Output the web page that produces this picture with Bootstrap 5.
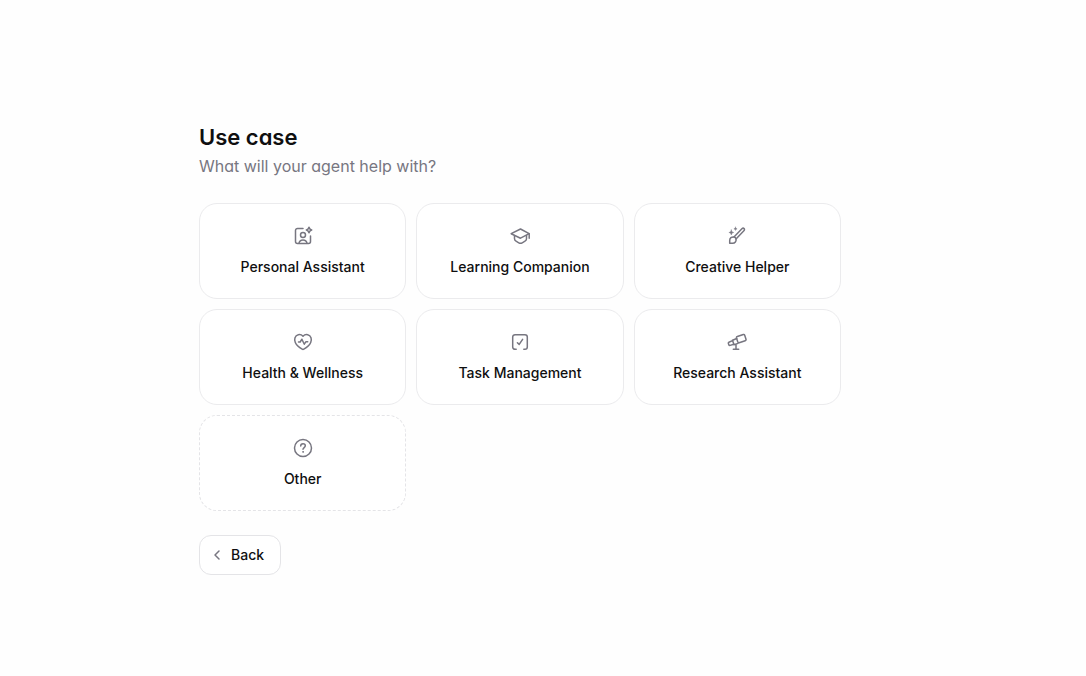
<!DOCTYPE html>
<html lang="en">
<head>
<meta charset="utf-8">
<meta name="viewport" content="width=device-width, initial-scale=1">
<title>Use case</title>
<link href="https://cdn.jsdelivr.net/npm/bootstrap@5.3.0/dist/css/bootstrap.min.css" rel="stylesheet">
<style>
  body { font-family: Inter, "Liberation Sans", sans-serif; font-size: 14px; line-height: 20px; color: #0f0f10; background: #fefefe; }
  .page { padding: 122px 58px 24px 12px; }
  .wizard { max-width: 642px; }
  .title, .subtitle { font-feature-settings: "cv11", "ss03"; }
  .title { font-size: 22px; line-height: 30px; font-weight: 600; }
  .subtitle { font-size: 16px; line-height: 28px; color: #777681; margin-bottom: 23px; }
  .choices { display: grid; grid-template-columns: repeat(3, minmax(0, 1fr)); gap: 10px; margin-bottom: 24px; }
  .choice, .back { border: 1px solid #ebebed; background: #fff; color: #0f0f10; font-size: 14px; line-height: 20px; font-weight: 500; }
  .choice { border-radius: 18px; padding: 22px 12px 21px; gap: 11px; }
  .choice:hover, .back:hover { background: #f8f8f9; border-color: #dedee2; }
  .other { border-style: dashed; border-color: #e4e4e7; }
  .back { border-color: #e4e4e7; border-radius: 12px; padding: 9px 16px 9px 12px; gap: 8px; }
  svg { fill: none; stroke: #777680; stroke-width: 1.5; stroke-linecap: round; stroke-linejoin: round; }
  @media (max-width: 600px) { .page { padding: 40px 16px; } .choices { grid-template-columns: 1fr; } }
</style>
</head>
<body>
<main class="page">
  <div class="wizard mx-auto">
    <h1 class="title mb-0">Use case</h1>
    <p class="subtitle">What will your agent help with?</p>
    <div class="choices">
      <button type="button" class="choice btn d-flex flex-column align-items-center">
        <svg width="20" height="20" viewBox="0 0 20 20" aria-hidden="true"><path d="M10 2.500H4.500a2 2 0 0 0-2 2v11a2 2 0 0 0 2 2h11a2 2 0 0 0 2-2V10"/><circle cx="10" cy="9" r="2.500"/><path d="M6 17.200c.4-2.200 1.900-3.200 4-3.200s3.600 1 4 3.200"/><path d="M16 1.300c.5 1.800 1 2.300 2.700 2.700-1.700.4-2.200 1-2.700 2.700-.5-1.700-1-2.300-2.700-2.700 1.700-.4 2.200-.9 2.700-2.700Z"/></svg>
        <span>Personal Assistant</span>
      </button>
      <button type="button" class="choice btn d-flex flex-column align-items-center">
        <svg width="20" height="20" viewBox="0 0 20 20" aria-hidden="true"><path d="M1.200 7.700 10.500 3l8.700 4.700-8.700 4.500L1.200 7.700Z"/><path d="M4.500 9.600v3.200c0 1.100.5 1.800 1.500 2.400l2.800 1.600c1.100.6 2.300.6 3.400 0l2.800-1.600c1-.6 1.500-1.300 1.500-2.400V9.600M19.200 7.900v4.300"/></svg>
        <span>Learning Companion</span>
      </button>
      <button type="button" class="choice btn d-flex flex-column align-items-center">
        <svg width="20" height="20" viewBox="0 0 20 20" aria-hidden="true"><path d="m7 11 7.900-8.200c.7-.7 1.600-.8 2.200-.2s.5 1.500-.2 2.200L9 13"/><path d="M9 13c-.2-1.200-.9-1.900-2-2-2.600-.3-4.300 1-4.300 3.400v2.900h2.900C8 17.300 9.500 15.400 9 13Z"/><path d="M8.500 1.200c.2 1 .6 1.400 1.600 1.600-1 .2-1.400.6-1.600 1.600-.2-1-.6-1.400-1.600-1.600 1-.2 1.400-.6 1.600-1.600ZM4.300 4c.3 1.600.9 2.200 2.400 2.500-1.500.3-2.100.9-2.400 2.400-.3-1.500-.9-2.100-2.400-2.400C3.400 6.200 4 5.600 4.300 4Z" fill="#777680" stroke-width=".5"/></svg>
        <span>Creative Helper</span>
      </button>
      <button type="button" class="choice btn d-flex flex-column align-items-center">
        <svg width="20" height="20" viewBox="0 0 20 20" aria-hidden="true"><path d="M10 4.200C8.600 2.700 7 2.300 5.300 2.700 1.900 3.500.9 7.200 2.300 10.500c1.200 2.700 3.800 4.900 6.900 6.700.5.3 1.100.3 1.600 0 3.100-1.800 5.700-4 6.900-6.700 1.400-3.300.4-7-3-7.800C13 2.300 11.400 2.700 10 4.200Z"/><path d="M5.500 10h1.700l1.700-2.800 2.400 5 1.700-2.500h1.700"/></svg>
        <span>Health &amp; Wellness</span>
      </button>
      <button type="button" class="choice btn d-flex flex-column align-items-center">
        <svg width="20" height="20" viewBox="0 0 20 20" aria-hidden="true"><path d="M6.200 17.300H5a2.300 2.300 0 0 1-2.300-2.300V5A2.300 2.300 0 0 1 5 2.700h10A2.300 2.300 0 0 1 17.300 5v10a2.300 2.300 0 0 1-2.300 2.300h-1.200M7.400 10.700l1.800 1.700 3.400-5"/></svg>
        <span>Task Management</span>
      </button>
      <button type="button" class="choice btn d-flex flex-column align-items-center">
        <svg width="20" height="20" viewBox="0 0 20 20" aria-hidden="true"><path d="m10.300 4.500 6-2c.7-.2 1.200.1 1.400.7l1.300 4.100c.2.700-.1 1.200-.8 1.400l-6 2c-.7.200-1.200-.1-1.400-.8L9.500 6c-.2-.7.100-1.300.8-1.500Z"/><path d="M9.700 6.500 5.500 8.200l1.500 4.500 4-1.300M5.500 8.600l-3.600 1.600c-.5.200-.7.700-.5 1.200l.5 1.500c.2.500.6.700 1.200.5l3.700-1.100M9 12.200v5.100M6.300 17.300h5.400"/></svg>
        <span>Research Assistant</span>
      </button>
      <button type="button" class="choice other btn d-flex flex-column align-items-center">
        <svg width="20" height="20" viewBox="0 0 20 20" aria-hidden="true"><circle cx="10" cy="10" r="8.500"/><path d="M7.700 8c0-1.400 1-2.300 2.300-2.300s2.300.9 2.300 2.100c0 1.700-2.300 1.800-2.300 3.500"/><circle cx="10" cy="13.900" r=".4" fill="#777680" stroke-width="1"/></svg>
        <span>Other</span>
      </button>
    </div>
    <button type="button" class="back btn d-inline-flex align-items-center">
      <svg width="11" height="12" viewBox="0 0 11 12" aria-hidden="true"><path d="M7 2 3 6l4 4"/></svg>
      <span>Back</span>
    </button>
  </div>
</main>
<script src="https://cdn.jsdelivr.net/npm/bootstrap@5.3.0/dist/js/bootstrap.bundle.min.js"></script>
</body>
</html>
